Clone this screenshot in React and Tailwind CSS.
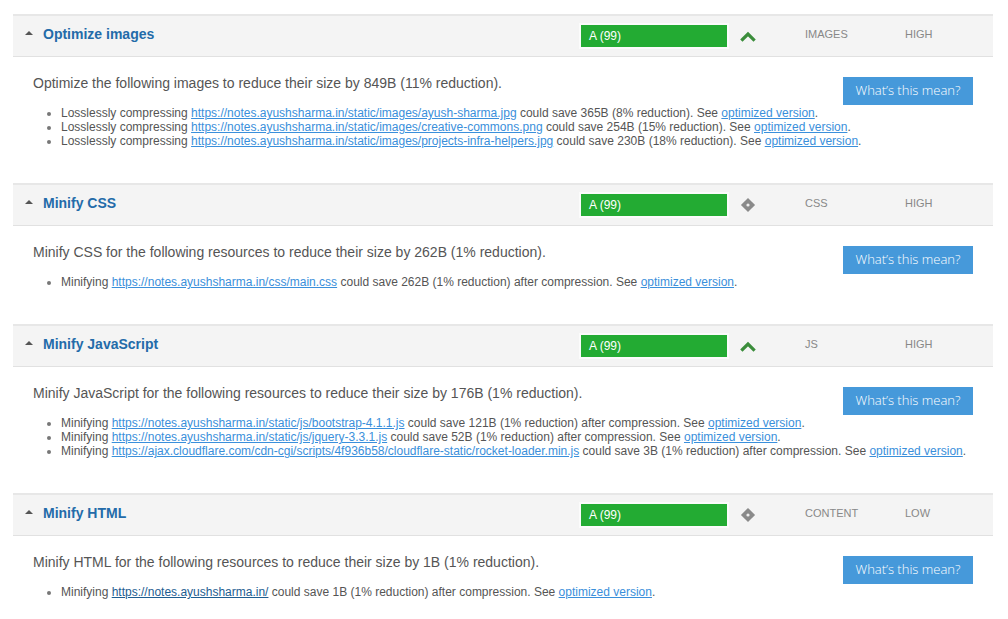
import React from 'react';

const SECTIONS = [
  {
    title: 'Optimize images',
    icon: 'up',
    type: 'IMAGES',
    priority: 'HIGH',
    summary: 'Optimize the following images to reduce their size by 849B (11% reduction).',
    items: [
      { pre: 'Losslessly compressing ', url: 'https://notes.ayushsharma.in/static/images/ayush-sharma.jpg', post: ' could save 365B (8% reduction). See ' },
      { pre: 'Losslessly compressing ', url: 'https://notes.ayushsharma.in/static/images/creative-commons.png', post: ' could save 254B (15% reduction). See ' },
      { pre: 'Losslessly compressing ', url: 'https://notes.ayushsharma.in/static/images/projects-infra-helpers.jpg', post: ' could save 230B (18% reduction). See ' },
    ],
  },
  {
    title: 'Minify CSS',
    icon: 'diamond',
    type: 'CSS',
    priority: 'HIGH',
    summary: 'Minify CSS for the following resources to reduce their size by 262B (1% reduction).',
    items: [
      { pre: 'Minifying ', url: 'https://notes.ayushsharma.in/css/main.css', post: ' could save 262B (1% reduction) after compression. See ' },
    ],
  },
  {
    title: 'Minify JavaScript',
    icon: 'up',
    type: 'JS',
    priority: 'HIGH',
    summary: 'Minify JavaScript for the following resources to reduce their size by 176B (1% reduction).',
    items: [
      { pre: 'Minifying ', url: 'https://notes.ayushsharma.in/static/js/bootstrap-4.1.1.js', post: ' could save 121B (1% reduction) after compression. See ' },
      { pre: 'Minifying ', url: 'https://notes.ayushsharma.in/static/js/jquery-3.3.1.js', post: ' could save 52B (1% reduction) after compression. See ' },
      { pre: 'Minifying ', url: 'https://ajax.cloudflare.com/cdn-cgi/scripts/4f936b58/cloudflare-static/rocket-loader.min.js', post: ' could save 3B (1% reduction) after compression. See ' },
    ],
  },
  {
    title: 'Minify HTML',
    icon: 'diamond',
    type: 'CONTENT',
    priority: 'LOW',
    summary: 'Minify HTML for the following resources to reduce their size by 1B (1% reduction).',
    items: [
      { pre: 'Minifying ', url: 'https://notes.ayushsharma.in/', post: ' could save 1B (1% reduction) after compression. See ', visited: true },
    ],
  },
];

function TrendIcon({ kind }) {
  if (kind === 'up') {
    return (
      <svg width="16" height="16" viewBox="0 0 16 16">
        <polyline points="2.5,11.5 8,6 13.5,11.5" fill="none" stroke="#3b8d3b" strokeWidth="3.2" strokeLinecap="square" />
      </svg>
    );
  }
  return (
    <svg width="16" height="16" viewBox="0 0 16 16">
      <rect x="3" y="3" width="10" height="10" fill="#8a8a8a" transform="rotate(45 8 8)" />
      <circle cx="8" cy="8" r="1.6" fill="#eeeeee" />
    </svg>
  );
}

function Section({ s }) {
  return (
    <div className="pb-[35px]">
      <div className="flex items-start h-[43px] border-t-2 border-b border-t-[#e7e7e7] border-b-[#e1e1e1] bg-[#f4f4f4]">
        <div className="w-[566px] flex items-center pl-3 pt-[8px] h-[28px] gap-[10px]">
          <svg width="8" height="6" viewBox="0 0 8 6" className="mt-[-2px]">
            <polygon points="4,1 8,5 0,5" fill="#555" />
          </svg>
          <span className="text-[14px] leading-5 font-bold text-[#236ba9]">{s.title}</span>
        </div>
        <div className="mt-[7px] w-[150px] h-[26px] border-2 border-[#fbfbfb] bg-[#fbfbfb]">
          <div className="h-full w-full bg-[#23ab33] text-white text-[12px] leading-[22px] pl-2">A (99)</div>
        </div>
        <div className="ml-[11px] mt-[12px]">
          <TrendIcon kind={s.icon} />
        </div>
        <div className="ml-[49px] w-[100px] mt-[10px] text-[11px] leading-4 text-[#888]">{s.type}</div>
        <div className="mt-[10px] text-[11px] leading-4 text-[#888]">{s.priority}</div>
      </div>
      <div className="px-[20px] flow-root">
        <button className="float-right mt-[20px] w-[130px] h-[28px] bg-[#4699da] text-white text-[13px] font-['Open_Sans',sans-serif] font-light">
          What&#8217;s this mean?
        </button>
        <div className="pt-[16px]">
          <p className="text-[14px] leading-5 text-[#555]">{s.summary}</p>
          <ul className="mt-[13px] pl-[28px] list-disc text-[12px] leading-[14px] text-[#555] marker:text-[#777]">
            {s.items.map((it) => (
              <li key={it.url} className="whitespace-nowrap">
                {it.pre}
                <a href="#" className={`underline ${it.visited ? 'text-[#1d5d91]' : 'text-[#3a8fdb]'}`}>{it.url}</a>
                {it.post}
                <a href="#" className="underline text-[#3a8fdb]">optimized version</a>.
              </li>
            ))}
          </ul>
        </div>
      </div>
    </div>
  );
}

export default function App() {
  return (
    <div className="min-h-[619px] bg-white font-['Liberation_Sans',Arial,sans-serif] pl-[13px] pr-[15px] pt-[14px]">
      {SECTIONS.map((s) => (
        <Section key={s.title} s={s} />
      ))}
    </div>
  );
}
